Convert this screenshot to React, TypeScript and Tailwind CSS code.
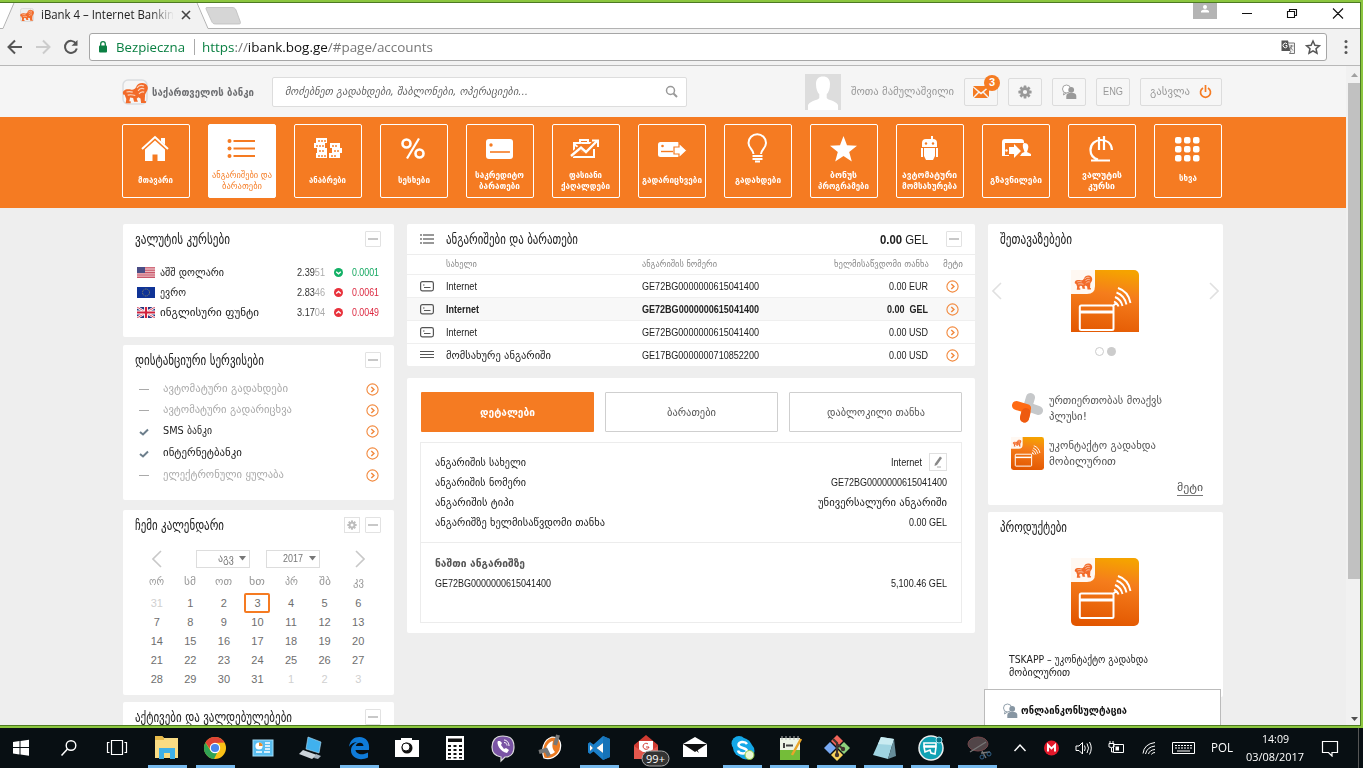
import { useLayoutEffect, useRef, useState } from "react";
import type { ReactNode } from "react";

/* Single-line text condensed or widened to a given width. */
function T({ w, c = "", low, children }: { w: number; c?: string; low?: boolean; children: ReactNode }) {
  const ref = useRef<HTMLSpanElement>(null);
  const [s, setS] = useState(1);
  useLayoutEffect(() => {
    if (ref.current && ref.current.offsetWidth) {
      const natural = parseFloat(getComputedStyle(ref.current).width);
      setS(w / natural);
    }
  }, [w]);
  return (
    <span className={`block shrink-0 whitespace-nowrap ${low ? "pt-[2px]" : ""} ${c}`} style={{ width: w }}>
      <span ref={ref} className="inline-block origin-left" style={{ transform: `scaleX(${s})` }}>
        {children}
      </span>
    </span>
  );
}

function LionShape() {
  return (
    <g fill="#f26b2a">
      <path d="M1 9.500C3 7.500 6.500 7.600 9 8.300C11 8.500 12.600 7.600 13.600 5.600C14.600 3 17 1.400 20 1.600C23.400 1.800 25.600 4.200 25.300 7C25 9.600 23.600 10.600 22.600 13L22.200 19.400H23.400V21.400H18.600L18 17L15.800 15.800L14.200 17.200L15.400 20.200H11.600L10.600 16.600L7.600 16L6.800 19.800H8.200V21.800H3.200L3.800 17.400L2.600 14.400C2 13 2.400 12.400 1.400 13.600C.2 12.600 0 10.600 1 9.500Z" />
      <path d="M14.500 6.500c1.400-2.400 4.200-3.200 7-2M15.600 9.400c1.200-2 3.600-3 6.200-2M16.500 12.600c1-1.800 3-2.600 5.200-2M4 10.600c2-.8 4-.6 6.200 0M5.200 13.600c2.400-.6 5-.4 7.600.4" stroke="#fbd6c0" strokeWidth="1.100" fill="none" />
    </g>
  );
}

function Minus() {
  return (
    <span className="flex size-4 shrink-0 items-center justify-center rounded-[1px] border border-[#e2e2e2] bg-white">
      <span className="h-[2px] w-[10px] bg-[#c8c8c8]" />
    </span>
  );
}

function CircleArrow() {
  return (
    <svg className="size-[13px] shrink-0" viewBox="0 0 13 13" fill="none" stroke="#f28a3f">
      <circle cx="6.500" cy="6.500" r="5.600" strokeWidth="1.100" />
      <path d="M5.300 4L7.900 6.500L5.300 9" strokeWidth="1.500" />
    </svg>
  );
}

function Gear({ size, color }: { size: number; color: string }) {
  return (
    <svg width={size} height={size} viewBox="0 0 16 16" className="shrink-0">
      <g fill={color}>
        {[0, 45, 90, 135, 180, 225, 270, 315].map((a) => (
          <rect key={a} x="6.400" y="0.500" width="3.200" height="4" rx=".6" transform={`rotate(${a} 8 8)`} />
        ))}
      </g>
      <circle cx="8" cy="8" r="3.900" fill="none" stroke={color} strokeWidth="3" />
    </svg>
  );
}

function ChatPerson({ color }: { color: string }) {
  return (
    <svg className="size-4 shrink-0" viewBox="0 0 16 16">
      <circle cx="5.500" cy="5" r="4" fill="#fff" stroke={color} strokeWidth=".9" />
      <path d="M3 8.500L2.500 11L5.500 9" fill="none" stroke={color} strokeWidth=".9" />
      <circle cx="10.200" cy="5.800" r="2.900" fill={color} />
      <path d="M5.300 15V12c0-2.200 2-3.200 5-3.200s5 1 5 3.200v3z" fill={color} />
    </svg>
  );
}

function Chevron({ left, color = "#d6d6d6", h = 18 }: { left?: boolean; color?: string; h?: number }) {
  return (
    <svg width="10" height={h} viewBox="0 0 10 18" className="shrink-0" fill="none" stroke={color} strokeWidth="1.600">
      <path d={left ? "M9 1L1 9L9 17" : "M1 1L9 9L1 17"} />
    </svg>
  );
}

function CardTitle({ text, w, gear, tool = true }: { text: string; w: number; gear?: boolean; tool?: boolean }) {
  return (
    <div className="flex h-[30px] items-center pl-3 pr-[13px]">
      <T w={w} c="text-[14.500px] leading-[20px] text-[#222]">{text}</T>
      <div className="ml-auto flex gap-[5px]">
        {gear && (
          <span className="flex size-4 items-center justify-center border border-[#e2e2e2]">
            <Gear size={10} color="#bdbdbd" />
          </span>
        )}
        {tool && <Minus />}
      </div>
    </div>
  );
}

/* ---------- browser chrome ---------- */

function TabStrip() {
  return (
    <div className="relative h-[26px] bg-white">
      <svg className="absolute left-0 top-0" width="1360" height="26" viewBox="0 0 1360 26">
        <path d="M0 25.500H3C4 25 5 23 6 20L12 4C13 1 14 0 16 0H193C196 0 197 1 198 4L206 22C207 25 208 25.500 210 25.500H1360V27H0Z" fill="#f2f2f2" />
        <path d="M0 25.500H3L14 0M197 0L208 25.500H1360" fill="none" stroke="#b2b2b2" />
        <path d="M207 4.500H232C234 4.500 235 5 236 7L240 18C241 20.500 240.500 21 238 21H216C213.500 21 212.500 20.500 211.500 18L206.500 7C205.600 5 205.600 4.500 207 4.500Z" fill="#d6d6d6" stroke="#bcbcbc" strokeWidth=".8" />
        <rect x="20.500" y="5.500" width="13" height="13" rx="2" fill="#eee" stroke="#ddd" />
        <g transform="translate(20 6) scale(.55)"><LionShape /></g>
        <path d="M182 8L190 16M190 8L182 16" stroke="#444" strokeWidth="1.600" />
        <rect x="1193" y="0" width="24" height="16" fill="#b4b4b4" />
        <circle cx="1205" cy="4" r="2" fill="#fff" />
        <path d="M1201 9.500V8Q1202 6.500 1205 6.500T1209 8V9.500Z" fill="#fff" />
        <path d="M1242 10.500H1252M1287.500 8.500H1294.500V14.500H1287.500ZM1289.500 8.500V6.500H1296.500V12.500H1294.500M1333 5.500L1343 15.500M1343 5.500L1333 15.500" fill="none" stroke="#111" strokeWidth="1.100" />
      </svg>
      <div className="relative flex h-6 items-center pl-[41px]">
        <div className="w-[133px] overflow-hidden text-[12px] text-[#222] [mask-image:linear-gradient(to_right,black_82%,transparent)]">
          <T w={133} c="font-['Open_Sans',sans-serif]">iBank 4 – Internet Bankin</T>
        </div>
      </div>
    </div>
  );
}

function Toolbar() {
  return (
    <div className="flex h-[37px] items-center border-b border-[#b8b8b8] bg-[#f2f2f2] font-['Open_Sans',sans-serif]">
      <svg width="89" height="36" viewBox="0 0 89 36" fill="none">
        <path d="M22 18H9M15 11.500L8.500 18L15 24.500" stroke="#555" strokeWidth="2" />
        <path d="M36 18H49M43 11.500L49.500 18L43 24.500" stroke="#ccc" strokeWidth="2" />
        <path d="M76 14.500A6 6 0 1 0 76.800 19.500" stroke="#555" strokeWidth="2" />
        <path d="M77.500 11V16.800H71.500Z" fill="#555" />
      </svg>
      <div className="flex h-7 w-[1238px] items-center rounded-[3px] border border-[#a6a6a6] bg-white text-[13.500px]">
        <svg width="10" height="14" viewBox="0 0 10 14" className="ml-2">
          <rect x="1" y="5.500" width="8" height="7" rx="1" fill="#0b8043" />
          <path d="M2.700 6V4a2.300 2.300 0 0 1 4.600 0V6" fill="none" stroke="#0b8043" strokeWidth="1.300" />
        </svg>
        <T w={69} c="ml-2 text-[#0b8043]">Bezpieczna</T>
        <span className="ml-[9px] h-4 w-px bg-[#aaa]" />
        <T w={231} c="ml-[7px] text-[#777]">
          <span className="text-[#0b8043]">https</span>://<span className="text-[#111]">ibank.bog.ge</span>/#page/accounts
        </T>
        <svg className="ml-auto" width="46" height="18" viewBox="0 0 46 18">
          <path d="M1.500 2.500H8L10.500 13H1.500Z" fill="#555" />
          <path d="M8 5H14.500V15.500H9.500L11 13" fill="#f2f2f2" stroke="#777" />
          <path d="M7 5.800A2.300 2.300 0 1 0 7 9V7.500H5.500" fill="none" stroke="#fff" />
          <path d="M9.500 8H13.500M11.500 7V8C11.500 10 10.500 11 9.500 12M10 9L13 12.500" fill="none" stroke="#777" strokeWidth=".9" />
          <path d="M33 3L34.900 7.200L39.400 7.700L36 10.700L37 15.200L33 12.900L29 15.200L30 10.700L26.600 7.700L31.100 7.200Z" fill="none" stroke="#555" strokeWidth="1.500" />
        </svg>
      </div>
      <svg className="ml-4" width="6" height="18" viewBox="0 0 6 18" fill="#555">
        <circle cx="3" cy="3.500" r="1.500" /><circle cx="3" cy="9" r="1.500" /><circle cx="3" cy="14.500" r="1.500" />
      </svg>
    </div>
  );
}

/* ---------- page header ---------- */

function Header() {
  const btn = "relative flex h-7 items-center justify-center rounded-[2px] border border-[#dcdcdc] bg-[#f6f6f6]";
  return (
    <header className="flex h-[51px] items-center bg-[#f5f5f5] pl-[122px] text-[#999]">
      <svg width="27" height="26" viewBox="0 0 27 26">
        <rect x="1" y="1" width="24" height="24" rx="5" fill="#f6f6f6" stroke="#dadde0" strokeWidth="1.500" />
        <g transform="translate(.5 2.500)"><LionShape /></g>
      </svg>
      <T w={102} low c="ml-[3px] text-[10.500px] font-bold text-[#6d6e71]">საქართველოს ბანკი</T>
      <div className="ml-[18px] flex h-[30px] w-[415px] items-center rounded-[2px] border border-[#ddd] bg-white pl-3 pr-2">
        <T w={243} low c="text-[11px] italic text-[#666]">მოძებნეთ გადახდები, შაბლონები, ოპერაციები...</T>
        <svg className="ml-auto" width="13" height="13" viewBox="0 0 13 13" fill="none" stroke="#999" strokeWidth="1.500">
          <circle cx="5.500" cy="5.500" r="4" /><path d="M8.500 8.500L12 12" strokeWidth="2" />
        </svg>
      </div>
      <svg className="ml-[118px] mt-px" width="36" height="36" viewBox="0 0 36 36">
        <rect width="36" height="36" fill="#ddd" />
        <path d="M18 2.500C22.500 2.500 25 5 25 10C25 15 23.500 18.500 21.700 20.300V24C23 26.500 30 26 33 31V36H3V31C6 26 13 26.500 14.300 24V20.300C12.500 18.500 11 15 11 10C11 5 13.500 2.500 18 2.500Z" fill="#fff" />
      </svg>
      <T w={103} low c="ml-[10px] pt-1 text-[11px]">შოთა მამულაშვილი</T>
      <div className="ml-[10px] flex gap-[10px]">
        <div className={`${btn} w-[34px]`}>
          <svg width="16" height="12" viewBox="0 0 16 12" fill="#f57b22">
            <path d="M0 0H16L8 6.500ZM0 1.500L5 6L0 11ZM16 1.500L11 6L16 11ZM1 12L6 7L8 8.500L10 7L15 12Z" />
          </svg>
          <span className="absolute -right-[3px] -top-[4px] flex size-4 items-center justify-center rounded-full bg-[#f57b22] font-['Liberation_Sans',sans-serif] text-[11px] font-bold text-white">3</span>
        </div>
        <div className={`${btn} w-[34px]`}><Gear size={14} color="#999" /></div>
        <div className={`${btn} w-[34px]`}><ChatPerson color="#999" /></div>
        <div className={`${btn} w-[34px]`}><T w={20} c="font-['Liberation_Sans',sans-serif] text-[11px]">ENG</T></div>
        <div className={`${btn} w-[82px]`}>
          <T w={40} low c="text-[11px]">გასვლა</T>
          <svg className="ml-[9px]" width="13" height="14" viewBox="0 0 13 14" fill="none" stroke="#f57b22" strokeWidth="1.700">
            <path d="M4 3A5 5 0 1 0 9 3M6.500 0V7" />
          </svg>
        </div>
      </div>
    </header>
  );
}

/* ---------- navigation ---------- */

const navIcons: Record<string, ReactNode> = {
  home: <><path d="M3 16L16 4L29 16" fill="none" stroke="#fff" strokeWidth="2" /><path d="M22 5h4v7l-4-3.500z" /><path d="M6 16.500L16 7.500L26 16.500V28H18.500V21.500H13.500V28H6Z" /></>,
  list: <g fill="#f57b22"><circle cx="4.500" cy="8" r="2" /><circle cx="4.500" cy="15.500" r="2" /><circle cx="4.500" cy="23" r="2" /><path d="M8.500 7H30V9H8.500ZM8.500 14.500H30V16.500H8.500ZM8.500 22H30V24H8.500Z" /></g>,
  coins: <><path d="M5 5h11v5H5zM3 10h11v5H3zM6 15h10v5H6zM5 20h11v5H5zM19 10h10v5H19zM21 15h10v5H21zM18 20h11v5H18z" /><path d="M8 7v2M11 7v2M14 7v2M6 12v2M9 12v2M12 12v2M9 17v2M12 17v2M8 22v2M11 22v2M14 22v2M22 12v2M25 12v2M24 17v2M27 17v2M21 22v2M24 22v2" stroke="#f57b22" strokeWidth="1.400" /></>,
  percent: <g fill="none" stroke="#fff" strokeWidth="2.600"><circle cx="9.500" cy="10.500" r="4" /><circle cx="22.500" cy="20.500" r="4" /><path d="M22 5.500L10 25.500" strokeWidth="2.200" /></g>,
  card: <><rect x="3" y="6" width="27" height="20" rx="3" /><circle cx="8" cy="12" r="1.700" fill="#f57b22" /><path d="M7 19h20" stroke="#f57b22" strokeWidth="1.600" /></>,
  brief: <g fill="none" stroke="#fff" strokeWidth="2"><path d="M25 10H5V24H25V16M11 10V7h8v3M5 11L15 19L20 14" /><path d="M3 22L12 14L17 19L27 8" stroke="#f57b22" strokeWidth="5" /><path d="M2 23L12 14.500L17 19L28 8" strokeWidth="2.400" /><path d="M23 7.500H29V14" /></g>,
  transfer: <><rect x="3" y="9" width="22" height="15" rx="2.500" /><circle cx="7.500" cy="13" r="1.300" fill="#f57b22" /><path d="M6 18.500H18" stroke="#f57b22" strokeWidth="1.400" /><path d="M19 14h5V10L32 17.500L24 25V21h-5z" stroke="#f57b22" strokeWidth="1.200" /></>,
  bulb: <g fill="none" stroke="#fff" strokeWidth="2"><path d="M12.500 21C12.500 17 7.500 15 7.500 10A8.700 8.700 0 0 1 25 10C25 15 20 17 20 21" /><path d="M11.500 23h10M11.500 26h10M14 28.500h5" /></g>,
  star: <path d="M16.500 3L20 12.300L30 12.800L22.200 19L24.800 28.500L16.500 23L8.200 28.500L10.800 19L3 12.800L13 12.300Z" />,
  robot: <><path d="M18 3h2v4h-2z" /><path d="M9 10Q9 6 13 6h7Q24 6 24 10v4H9z" /><path d="M8 15h2v9H8zM23 15h2v9h-2zM11 15h11v8l-2 4h-7l-2-4z" /><circle cx="13" cy="10.500" r="1.200" fill="#f57b22" /><circle cx="20" cy="10.500" r="1.200" fill="#f57b22" /></>,
  send: <><path d="M3 23V9Q3 6 6 6H22Q25 6 25 9V10H6V22H10V23Z" /><circle cx="7.500" cy="17.500" r="1.200" /><path d="M10 14h5V11L22 18L15 25V21H10z" /><path d="M25.500 10c3.500 0 4.500 3 3.500 6l-1 3 4 2v2H21l2-3 2.500-1-1-3c-1-3-1-6 1-6z" /></>,
  lari: <g fill="none" stroke="#fff" strokeWidth="2.200"><path d="M13 26.500C7 25 5.500 21 5.500 17C5.500 10.500 10.500 7 16 7S26.500 10 27 17M14 4V17M19 3V17M6 27.500H25" /></g>,
  grid: <>{[4, 13, 22].map((y) => [4, 13, 22].map((x) => <rect key={`${x}-${y}`} x={x} y={y} width="6.500" height="6.500" rx="2" />))}</>,
};

const nav: { icon: string; lines: [string, number][]; active?: boolean }[] = [
  { icon: "home", lines: [["მთავარი", 35]] },
  { icon: "list", lines: [["ანგარიშები და", 60], ["ბარათები", 40]], active: true },
  { icon: "coins", lines: [["ანაბრები", 37]] },
  { icon: "percent", lines: [["სესხები", 32]] },
  { icon: "card", lines: [["საკრედიტო", 49], ["ბარათები", 41]] },
  { icon: "brief", lines: [["ფასიანი", 33], ["ქაღალდები", 49]] },
  { icon: "transfer", lines: [["გადარიცხვები", 60]] },
  { icon: "bulb", lines: [["გადახდები", 46]] },
  { icon: "star", lines: [["ბონუს", 27], ["პროგრამები", 51]] },
  { icon: "robot", lines: [["ავტომატური", 55], ["მომსახურება", 55]] },
  { icon: "send", lines: [["გზავნილები", 52]] },
  { icon: "lari", lines: [["ვალუტის", 40], ["კურსი", 27]] },
  { icon: "grid", lines: [["სხვა", 18]] },
];

function Nav() {
  return (
    <nav className="flex h-[91px] gap-[18px] bg-[#f57b22] pl-[122px] pt-[7px]">
      {nav.map((n) => (
        <div key={n.icon} className={`flex h-[74px] w-[68px] shrink-0 flex-col items-center rounded-[2px] border border-white pt-2 ${n.active ? "bg-white text-[#f57b22]" : "text-white"}`}>
          <svg width="32" height="32" viewBox="0 0 32 32" fill="#fff" className="mr-[2px] shrink-0">{navIcons[n.icon]}</svg>
          <div className={`mr-px flex h-[22px] flex-col items-center justify-center text-[8.500px] font-bold leading-[11px] ${n.icon === "grid" ? "mt-[2px]" : n.lines.length > 1 ? "mt-[5px]" : "mt-1"}`}>
            {n.lines.map(([t, w]) => <T key={t} w={w} c={n.active ? "font-normal" : ""}>{t}</T>)}
          </div>
        </div>
      ))}
    </nav>
  );
}

/* ---------- left column ---------- */

function Flag({ kind }: { kind: string }) {
  if (kind === "us")
    return (
      <svg width="18" height="11" viewBox="0 0 18 11">
        <rect width="18" height="11" fill="#e9b9bf" />
        <path d="M0 .8H18M0 3.200H18M0 5.600H18M0 8H18M0 10.400H18" stroke="#c9566a" strokeWidth="1.100" />
        <rect width="8" height="6" fill="#4a4d85" />
      </svg>
    );
  if (kind === "eu")
    return (
      <svg width="18" height="11" viewBox="0 0 18 11">
        <rect width="18" height="11" fill="#0f3396" />
        <circle cx="9" cy="5.500" r="3.500" fill="none" stroke="#8f8d62" strokeDasharray="1 .85" />
      </svg>
    );
  return (
    <svg width="18" height="11" viewBox="0 0 18 11">
      <rect width="18" height="11" fill="#27357e" />
      <path d="M0 0L18 11M18 0L0 11" stroke="#fff" strokeWidth="2.400" />
      <path d="M0 0L18 11M18 0L0 11" stroke="#d0203c" strokeWidth=".8" />
      <path d="M9 0V11M0 5.500H18" stroke="#fff" strokeWidth="4" />
      <path d="M9 0V11M0 5.500H18" stroke="#d0203c" strokeWidth="2.200" />
    </svg>
  );
}

const rates = [
  { flag: "us", name: "აშშ დოლარი", w: 64, a: "2.39", b: "51", d: "0.0001", up: false },
  { flag: "eu", name: "ევრო", w: 26, a: "2.83", b: "46", d: "0.0061", up: true },
  { flag: "uk", name: "ინგლისური ფუნტი", w: 99, a: "3.17", b: "04", d: "0.0049", up: true },
];

const services = [
  { name: "ავტომატური გადახდები", w: 125, on: false, h: "h-[21px]" },
  { name: "ავტომატური გადარიცხვა", w: 129, on: false, h: "h-[21px]" },
  { name: "SMS ბანკი", w: 49, on: true, h: "h-[21px]" },
  { name: "ინტერნეტბანკი", w: 79, on: true, h: "h-[23px]" },
  { name: "ელექტრონული ყულაბა", w: 121, on: false, h: "h-[21px]" },
];

const days = ["31", ...Array.from({ length: 31 }, (_, i) => String(i + 1)), "1", "2", "3"];
const week: [string, number][] = [["ორ", 15], ["სმ", 12], ["ოთ", 17], ["ხთ", 16], ["პრ", 13], ["შბ", 12], ["კვ", 11]];

function LeftColumn() {
  return (
    <div className="flex w-[271px] flex-col">
      <section className="h-[113px] rounded-[2px] bg-white">
        <CardTitle text="ვალუტის კურსები" w={95} />
        <div className="pt-2">
          {rates.map((r) => (
            <div key={r.name} className="flex h-5 items-center pl-[14px] text-[11px]">
              <Flag kind={r.flag} />
              <T w={r.w} low c="ml-[5px] text-[#222]">{r.name}</T>
              <T w={28} c="ml-auto font-['Liberation_Sans',sans-serif] text-[#333]">{r.a}<span className="text-[#aaa]">{r.b}</span></T>
              <svg className="ml-[9px] shrink-0" width="9" height="9" viewBox="0 0 9 9">
                <circle cx="4.500" cy="4.500" r="4.500" fill={r.up ? "#e8323c" : "#12b065"} />
                <path d={r.up ? "M2.200 5.500L4.500 3.500L6.800 5.500" : "M2.200 3.700L4.500 5.700L6.800 3.700"} fill="none" stroke="#fff" strokeWidth="1.400" />
              </svg>
              <T w={27} c={`ml-[9px] mr-[15px] font-['Liberation_Sans',sans-serif] ${r.up ? "text-[#dc2840]" : "text-[#12a861]"}`}>{r.d}</T>
            </div>
          ))}
        </div>
      </section>

      <section className="mt-2 h-[155px] rounded-[2px] bg-white">
        <CardTitle text="დისტანციური სერვისები" w={129} />
        <div className="pt-1">
          {services.map((s) => (
            <div key={s.name} className={`flex ${s.h} items-center pl-4 pr-[15px] text-[11px]`}>
              <svg width="10" height="8" viewBox="0 0 10 8" fill="none">
                {s.on ? <path d="M1 4L4 6.500L9 1.500" stroke="#6d7f8c" strokeWidth="2" /> : <path d="M0 3.500H10" stroke="#aaa" />}
              </svg>
              <T w={s.w} c={`ml-[14px] ${s.on ? "text-[#222]" : "text-[#aaa]"}`}>{s.name}</T>
              <span className="ml-auto"><CircleArrow /></span>
            </div>
          ))}
        </div>
      </section>

      <section className="mt-[10px] h-[185px] rounded-[2px] bg-white text-[11px] text-[#777]">
        <CardTitle text="ჩემი კალენდარი" w={89} gear />
        <div className="mt-[9px] flex h-[19px] items-center pl-[29px]">
          <Chevron left color="#c8c8c8" />
          <div className="ml-[34px] flex h-[18px] w-[54px] items-center border border-[#ddd] pl-[21px]">
            <T w={16} low>აგვ</T>
            <svg className="ml-[5px]" width="7" height="5" fill="#777"><path d="M0 0H7L3.500 4.500Z" /></svg>
          </div>
          <div className="ml-4 flex h-[18px] w-[54px] items-center border border-[#ddd] pl-[16px]">
            <T w={20} c="font-['Liberation_Sans',sans-serif]">2017</T>
            <svg className="ml-[6px]" width="7" height="5" fill="#777"><path d="M0 0H7L3.500 4.500Z" /></svg>
          </div>
          <span className="ml-[35px]"><Chevron color="#c8c8c8" /></span>
        </div>
        <div className="ml-[17px] grid w-[235px] grid-cols-7 grid-rows-[25px_20px_19px_19px_19px_19px]">
          {week.map(([d, w]) => <div key={d} className="flex items-center justify-center pt-1 text-[#999]"><T w={w}>{d}</T></div>)}
          {days.map((d, i) => (
            <div key={i} className={`flex items-center justify-center font-['Liberation_Sans',sans-serif] text-[11px] ${i === 0 || i > 31 ? "text-[#d0d0d0]" : "text-[#6e6e6e]"}`}>
              <span className={i === 3 ? "flex h-5 w-[26px] items-center justify-center rounded-[2px] border-2 border-[#f57b22]" : ""}>{d}</span>
            </div>
          ))}
        </div>
      </section>

      <section className="mt-[7px] h-[30px] rounded-t-[2px] bg-white">
        <CardTitle text="აქტივები და ვალდებულებები" w={157} />
      </section>
    </div>
  );
}

/* ---------- middle column ---------- */

const accounts = [
  { name: "Internet", w: 31, no: "GE72BG0000000615041400", sum: "0.00 EUR", sw: 39 },
  { name: "Internet", w: 33, no: "GE72BG0000000615041400", sum: "0.00  GEL", sw: 41, bold: true },
  { name: "Internet", w: 31, no: "GE72BG0000000615041400", sum: "0.00 USD", sw: 39 },
  { name: "მომსახურე ანგარიში", w: 105, no: "GE17BG0000000710852200", sum: "0.00 USD", sw: 39, plain: true },
];

function MiddleColumn() {
  const latin = "font-['Liberation_Sans','DejaVu_Sans',sans-serif]";
  return (
    <div className="ml-[13px] flex w-[568px] flex-col text-[11px] text-[#222]">
      <section className="h-[142px] rounded-[2px] bg-white">
        <div className="flex h-[31px] items-center border-b border-[#ededed] pl-[13px] pr-[13px]">
          <svg width="14" height="10" viewBox="0 0 14 10" stroke="#777" strokeWidth="1.500"><path d="M0 1H2M3 1H14M0 5H2M3 5H14M0 9H2M3 9H14" /></svg>
          <T w={132} c="ml-3 text-[14.500px] leading-[20px]">ანგარიშები და ბარათები</T>
          <T w={48} c={`ml-auto mr-[18px] pt-[2px] text-[13px] ${latin}`}><b>0.00</b> GEL</T>
          <Minus />
        </div>
        <div className="flex h-5 items-center border-b border-[#efefef] pl-[39px] text-[9px] text-[#888]">
          <div className="w-[196px]"><T w={31}>სახელი</T></div>
          <T w={75}>ანგარიშის ნომერი</T>
          <T w={95} c="ml-auto">ხელმისაწვდომი თანხა</T>
          <T w={20} c="ml-[14px] mr-[12px]">მეტი</T>
        </div>
        {accounts.map((a, i) => (
          <div key={i} className={`flex h-[23px] items-center pl-[13px] ${latin} ${i < 3 ? "border-b border-[#efefef]" : ""} ${a.bold ? "bg-[#f8f8f8] font-bold" : ""}`}>
            <svg width="14" height="11" viewBox="0 0 14 11" fill="none" stroke="#555">
              {a.plain ? <path d="M0 1.500H14M0 4.500H14M0 7.500H14" /> : <><rect x=".6" y=".6" width="12.800" height="9.300" rx="1.800" strokeWidth="1.200" /><path d="M3 4H4.500M4 6.500H10.500" /></>}
            </svg>
            <div className="ml-3 w-[196px]"><T w={a.w} low={a.plain} c={a.plain ? "font-['DejaVu_Sans',sans-serif]" : ""}>{a.name}</T></div>
            <T w={117}>{a.no}</T>
            <T w={a.sw} c="ml-auto"><span className="whitespace-pre">{a.sum}</span></T>
            <span className="ml-[18px] mr-[16px]"><CircleArrow /></span>
          </div>
        ))}
      </section>

      <section className="mt-3 h-[255px] rounded-[2px] bg-white px-[13px] pt-[14px]">
        <div className="ml-px flex gap-[11px] text-[#555]">
          <div className="flex h-10 w-[173px] items-center justify-center rounded-[1px] bg-[#f57b22] font-bold text-white"><T w={55} low>დეტალები</T></div>
          <div className="flex h-10 w-[173px] items-center justify-center rounded-[1px] border border-[#cfcfcf]"><T w={49} low>ბარათები</T></div>
          <div className="flex h-10 w-[173px] items-center justify-center rounded-[1px] border border-[#cfcfcf]"><T w={98} low>დაბლოკილი თანხა</T></div>
        </div>
        <div className="mt-[10px] h-[181px] border border-[#ececec]">
          <div className="flex h-[100px] flex-col border-b border-[#ececec] px-[14px] pt-[9px]">
            <div className="flex h-5 items-center justify-between">
              <T w={91} low>ანგარიშის სახელი</T>
              <div className="flex items-center">
                <T w={31} c={latin}>Internet</T>
                <span className="ml-[7px] flex size-[18px] items-center justify-center border border-[#e0e0e0]">
                  <svg width="10" height="12" viewBox="0 0 10 12"><path d="M7 0.500L9 2L4 9L1.500 10L2 7.500Z" fill="#888" /><path d="M4 11H8" stroke="#aaa" /></svg>
                </span>
              </div>
            </div>
            <div className="flex h-5 items-center justify-between"><T w={91} low>ანგარიშის ნომერი</T><T w={116} c={latin}>GE72BG0000000615041400</T></div>
            <div className="flex h-5 items-center justify-between"><T w={79} low>ანგარიშის ტიპი</T><T w={129} low>უნივერსალური ანგარიში</T></div>
            <div className="flex h-5 items-center justify-between"><T w={170} low>ანგარიშზე ხელმისაწვდომი თანხა</T><T w={38} c={latin}>0.00 GEL</T></div>
          </div>
          <div className="px-[14px] pt-[10px]">
            <div className="flex h-5 items-center font-bold text-[#555]"><T w={90} low>ნაშთი ანგარიშზე</T></div>
            <div className={`flex h-5 items-center justify-between ${latin}`}><T w={116}>GE72BG0000000615041400</T><T w={56}>5,100.46 GEL</T></div>
          </div>
        </div>
      </section>
    </div>
  );
}

/* ---------- right column ---------- */

function AppTile({ id, size, h = 68 }: { id: string; size: number; h?: number }) {
  return (
    <svg width={size} height={(size * h) / 68} viewBox={`0 0 68 ${h}`} className="shrink-0">
      <defs>
        <linearGradient id={id} x1=".6" y1="0" x2=".45" y2="1">
          <stop offset="0" stopColor="#f5a300" /><stop offset=".35" stopColor="#f57d1c" /><stop offset="1" stopColor="#e25600" />
        </linearGradient>
      </defs>
      <rect width="68" height="68" rx="5" fill={`url(#${id})`} />
      <path d="M0 0H24V16Q24 24 16 24H0Z" fill="#fff8f2" />
      <g transform="translate(3.500 4.500) scale(.7)"><LionShape /></g>
      <g fill="none" stroke="#fff">
        <rect x="8.800" y="35.500" width="33.700" height="24.500" rx="1.500" strokeWidth="2" />
        <path d="M9 42H42" strokeWidth="3" />
        <path d="M42 36Q46 32 45 35M43 31.500Q46.500 33 47.500 36.500M44 27Q50 29.500 51.500 36M45.500 22.500Q53.500 25.500 55.500 34.500M47 18Q57.500 21.500 59.500 33" strokeWidth="1.900" />
      </g>
    </svg>
  );
}

function RightColumn() {
  return (
    <div className="ml-[13px] flex w-[235px] flex-col text-[11px] text-[#555]">
      <section className="h-[281px] rounded-[2px] bg-white">
        <CardTitle text="შეთავაზებები" w={72} tool={false} />
        <div className="mt-4 flex h-[62px] items-start justify-between px-1">
          <span className="mt-3"><Chevron left color="#e0e0e0" /></span>
          <span className="mr-px"><AppTile id="tileA" size={68} h={62} /></span>
          <span className="mt-3"><Chevron color="#e0e0e0" /></span>
        </div>
        <div className="mt-[15px] flex justify-center gap-[3px]">
          <span className="size-[9px] rounded-full border border-[#ccc]" />
          <span className="size-[9px] rounded-full bg-[#ccc]" />
        </div>
        <div className="mt-9 flex h-8 items-center pl-[23px]">
          <svg width="33" height="32" viewBox="0 0 33 32" fill="none" strokeLinecap="round" strokeWidth="9">
            <path d="M19.500 5.500L17 14M16 14.500L27.500 18.500" stroke="#c6c8ca" />
            <path d="M5.500 13.500L15.500 16.500L13.500 26" stroke="#ff6a13" strokeLinejoin="round" />
            <path d="M15 20.500L13.500 26" stroke="#ee5a10" />
          </svg>
          <div className="ml-[5px] pt-px leading-4"><T w={113}>ურთიერთობას მოაქვს</T><T w={38}>პლუსი!</T></div>
        </div>
        <div className="mt-[13px] flex h-[33px] items-center pl-[23px]">
          <AppTile id="tileB" size={33} />
          <div className="ml-[5px] pt-px leading-4"><T w={107}>უკონტაქტო გადახდა</T><T w={67}>მობილურით</T></div>
        </div>
        <div className="mt-[11px] flex justify-end pr-5"><T w={26} c="border-b border-[#777] leading-[14px]">მეტი</T></div>
      </section>

      <section className="mt-[7px] h-[185px] rounded-[2px] bg-white">
        <CardTitle text="პროდუქტები" w={67} tool={false} />
        <div className="mr-px mt-4 flex justify-center"><AppTile id="tileC" size={68} /></div>
        <div className="mt-[27px] pl-[21px] text-[10px] leading-[13px] text-[#222]">
          <T w={139}>TSKAPP – უკონტაქტო გადახდა</T>
          <T w={61}>მობილურით</T>
        </div>
      </section>
    </div>
  );
}

/* ---------- taskbar ---------- */

const apps: { k: string; run?: boolean; art: ReactNode }[] = [
  { k: "explorer", run: true, art: <><path d="M4 4H11L13 6H27V26H4Z" fill="#f9dc84" /><path d="M4 4H11L13 6V8H4Z" fill="#e8bb4b" /><path d="M8 16H24V27H19V21H13V27H8Z" fill="#3fb0e8" /></> },
  { k: "chrome", run: true, art: <><circle cx="16" cy="16" r="11" fill="#fbc116" /><path d="M16 5A11 11 0 0 1 25.600 10.600L16 11L11 17L6.400 10.500A11 11 0 0 1 16 5Z" fill="#de4436" /><path d="M6.400 10.500L11.500 18.800L18 21L15 27A11 11 0 0 1 6.400 10.500Z" fill="#31a354" /><circle cx="16" cy="16" r="5.200" fill="#fff" /><circle cx="16" cy="16" r="4.100" fill="#4a87ee" /></> },
  { k: "panel", art: <><rect x="6" y="8" width="20" height="16" fill="#58bdf0" stroke="#a3def9" /><circle cx="12" cy="14" r="3.600" fill="#fff" /><path d="M12 14V10.400A3.600 3.600 0 0 1 15.600 14Z" fill="#e98d28" /><path d="M18 11h5M18 14h5M18 17h5M9 20h6M17 20h6" stroke="#fff" strokeWidth="1.500" /></> },
  { k: "pc", art: <><path d="M13 5L26 10L24 21L11 17Z" fill="#40b1ee" stroke="#b4e1fa" strokeWidth=".6" /><path d="M8 18L22 23L17 27L4 22Z" fill="#ccd4da" /><path d="M21 22l5 2-3 3-4-1z" fill="#a8b4be" /></> },
  { k: "edge", run: true, art: <path d="M6 15C7 8 11 5 16.500 5C23 5 27 10 26 18H12.500C13 22 19 24 25 20.500V25.500C17 29.500 8 26 8 18.500C8 14 11 11.500 14 10C9 10.500 7 13 6 15ZM12.800 14H20.500C20.500 9.500 13.500 9.500 12.800 14Z" fill="#0f7bd9" /> },
  { k: "camera", art: <><path d="M4 8H10V6H21V8H28V25H4Z" fill="#fff" /><circle cx="16" cy="16" r="5.500" fill="#111" /><circle cx="15" cy="15" r="4" fill="#fff" stroke="#111" /></> },
  { k: "calc", art: <><rect x="7" y="4" width="18" height="24" fill="#fff" /><path d="M9 6.500H23V10H9ZM9 13h3v2H9zM14.500 13h3v2h-3zM20 13h3v2h-3zM9 17h3v2H9zM14.500 17h3v2h-3zM20 17h3v2h-3zM9 21h3v2H9zM14.500 21h3v2h-3zM20 21h3v2h-3zM9 25h3v1.500H9zM14.500 25h3v1.500h-3zM20 25h3v1.500h-3z" fill="#111" /></> },
  { k: "viber", art: <><path d="M16 4C24 4 27 8 27 15S23 25 18 25L14 29V25C8 24 5 21 5 15S8 4 16 4Z" fill="#7a54a5" stroke="#ddd" strokeWidth="1.200" /><path d="M11 9C9 11 13 20 20 21L22 18L19 16L17 17L14 13L15 11L13 9Z" fill="#fff" /><path d="M17 8C20 8 22 11 22 14M17 10.500C19 10.500 20 12 20 13.500" stroke="#fff" fill="none" /></> },
  { k: "tool", art: <><path d="M9 26C6 18 8 8 17 5C24 5 27 10 25 18C22 25 15 28 9 26Z" fill="#eb7a22" stroke="#fff" strokeWidth="1.200" /><path d="M11 21C10 15 13 10 18 9C17 13 17 17 20 20C17 23 14 23 11 21Z" fill="#fff" /><path d="M23 3L20 13M4 20L11 18L14 24" stroke="#777" strokeWidth="4" fill="none" /></> },
  { k: "code", run: true, art: <><path fillRule="evenodd" d="M20 4L27 7V25L20 28L10.500 19.500L7 22L5 20.500V11.500L7 10L10.500 12.500ZM20 11V21L13.500 16ZM7 13V19L10 16Z" fill="#1b7fc9" /><path d="M20 11V21L13.500 16ZM7 13V19L10 16Z" fill="#fff" /><path d="M20 4L27 7V25L20 28Z" fill="#1673b8" /></> },
  { k: "gmail", art: <><path d="M3 13L15 3L27 13V27H3Z" fill="#d13b32" /><rect x="8" y="9" width="14" height="11" fill="#fff" /><path d="M3 14L15 22L27 14V27H3Z" fill="#e4574d" /><path d="M17 12A3 3 0 1 0 18 15H15" stroke="#d13b32" fill="none" /><rect x="11" y="19" width="27" height="15" rx="7.500" fill="#333" stroke="#aaa" /><text x="24.500" y="31" fontSize="11" textAnchor="middle" fill="#fff" fontFamily="Open Sans">99+</text></> },
  { k: "mail", art: <><path d="M4 12L16 5L28 12V25H4Z" fill="#fff" /><path d="M4 12L28 12L16 20Z" fill="#111" /><path d="M4 12L14 16L20 21L17 15" fill="#111" /></> },
  { k: "skype", run: true, art: <><circle cx="12" cy="11.500" r="7.500" fill="#14a8e8" /><circle cx="19" cy="19" r="8.500" fill="#14a8e8" /><circle cx="15.500" cy="15.500" r="9.500" fill="#14a8e8" /><path d="M20 12C18 9 11 9.500 11.500 13S20 15.500 20 19S12 22.500 11 18.500" stroke="#fff" strokeWidth="2.500" fill="none" /><circle cx="22.500" cy="23" r="4.500" fill="#e9f9d4" stroke="#8cc63f" /></> },
  { k: "npp", run: true, art: <><path d="M6 6H26V28H6Z" fill="#eef5e8" /><path d="M6 18H26V28H6Z" fill="#74bd39" /><path d="M8 4v4M12 4v4M16 4v4M20 4v4M24 4v4" stroke="#bbb" /><path d="M10 11V16M12 13.500H19" stroke="#444" strokeWidth="2" /><path d="M27 7L18 23" stroke="#eaa52a" strokeWidth="2.500" /></> },
  { k: "git", run: true, art: <><path d="M16 3L22 9L16 15L10 9Z" fill="#f2645a" /><path d="M9 10L15 16L9 22L3 16Z" fill="#78a9f3" /><path d="M23 10L29 16L23 22L17 16Z" fill="#8ed17d" /><path d="M16 17L22 23L16 29L10 23Z" fill="#f8d35c" /><path d="M12 7L16 11V24M16 12L22 17" stroke="#43342f" strokeWidth="2.200" fill="none" /><circle cx="16" cy="23" r="2.200" fill="#43342f" /><circle cx="22" cy="17" r="2.200" fill="#43342f" /></> },
  { k: "notepad", run: true, art: <><path d="M13 5L26 7L20 27L5 23Z" fill="#9fd4e1" /><path d="M13 5L26 7L24 13L10 12Z" fill="#c9ebf1" /><path d="M26 7L28 24L20 27Z" fill="#668d9a" /></> },
  { k: "shorts", run: true, art: <><circle cx="16" cy="16" r="12" fill="#10a2b4" stroke="#eee" strokeWidth="1.500" /><path d="M9 11H21V14H9ZM9 15H21L20 22L16 21L15 18L10 20Z" fill="none" stroke="#fff" strokeWidth="1.600" /><circle cx="24" cy="8" r="3" fill="#0a6e82" stroke="#9ae4ee" /></> },
  { k: "snip", run: true, art: <><ellipse cx="16" cy="12" rx="10" ry="7" fill="#514548" stroke="#75474b" /><path d="M8 20L24 10M20 19L24 26M19 21L28 20" stroke="#777" strokeWidth="1.300" /><circle cx="20" cy="25" r="2" fill="none" stroke="#315f84" /><circle cx="27" cy="22" r="2" fill="none" stroke="#315f84" /></> },
];

function Taskbar() {
  return (
    <div className="flex h-10 items-center overflow-hidden bg-[#080f13] font-['Open_Sans',sans-serif] text-white">
      <svg width="143" height="40" viewBox="0 0 143 40" className="shrink-0">
        <path d="M13 14L19.500 13V19H13ZM20.500 13L29 11.800V19H20.500ZM13 20H19.500V26.500L13 25.500ZM20.500 20H29V27.800L20.500 26.600Z" fill="#fff" />
        <circle cx="71" cy="17.500" r="4.800" fill="none" stroke="#fff" strokeWidth="1.400" />
        <path d="M67.500 21L61.500 27.500" stroke="#fff" strokeWidth="1.500" />
        <path d="M111.500 12.500H122.500V26.500H111.500ZM109.500 14.500H107.500V24.500H109.500M124.500 14.500H126.500V24.500H124.500" fill="none" stroke="#fff" strokeWidth="1.200" />
      </svg>
      {apps.map((a, i) => (
        <div key={a.k} className={`flex h-10 shrink-0 flex-col items-center pt-[4px] ${i < 12 ? "w-12" : "w-[47px]"}`}>
          <svg width="32" height="32" viewBox="0 0 32 32" className="shrink-0 overflow-visible">{a.art}</svg>
          <span className={`mt-[1px] h-[3px] w-[39px] shrink-0 ${a.run ? "bg-[#76b9ed]" : ""}`} />
        </div>
      ))}
      <svg width="206" height="40" viewBox="1001 0 206 40" className="shrink-0" fill="none" stroke="#fff">
        <path d="M1014.500 23L1020 17L1025.500 23" strokeWidth="1.400" />
        <circle cx="1051.500" cy="20" r="7.500" fill="#e3192b" stroke="none" />
        <path d="M1048 23.500V17L1051.500 20.500L1055 17V23.500" strokeWidth="1.900" />
        <path d="M1076 18H1079L1082.500 14.500V26L1079 22.500H1076ZM1084.500 17.500Q1086 20 1084.500 23M1087 15.500Q1090 20 1087 25M1089.500 14Q1093 20 1089.500 26.500" />
        <path d="M1113.500 16.500H1123.500V24.500H1113.500ZM1109 15.500H1114V19Q1111.500 20 1109 19ZM1110 15.500V13M1113 15.500V13M1111.500 20V24H1113" /><path d="M1115.500 18.500H1119V22.500H1115.500Z" fill="#fff" stroke="none" />
        <path d="M1143 25.500Q1144 16 1155 14.500M1145.500 26Q1147 19 1155 18M1148.500 26Q1149.500 22 1155 21.500M1151.500 26.500Q1152 24.500 1155 24.500" />
        <path d="M1175 17.500H1192M1175 20H1192" strokeDasharray="2 1" /><path d="M1172.500 14.500H1194.500V25.500H1172.500ZM1177 23H1190" />
      </svg>
      <T w={22} c="ml-[4px] text-[12px]">POL</T>
      <div className="ml-[13px] flex flex-col items-center text-[11.500px] leading-[18px]">
        <T w={27}>14:09</T>
        <T w={58}>03/08/2017</T>
      </div>
      <svg className="ml-[17px] shrink-0" width="18" height="18" viewBox="0 0 18 18" fill="none" stroke="#fff" strokeWidth="1.200">
        <path d="M1.500 2.500H16.500V13.500H11V17L7.500 13.500H1.500Z" />
      </svg>
      <span className="ml-[19px] h-10 w-px shrink-0 bg-[#555]" />
    </div>
  );
}

export default function App() {
  return (
    <div className="flex h-[768px] w-[1363px] flex-col overflow-hidden bg-black font-['DejaVu_Sans',sans-serif]">
      <div className="h-[728px] border-b-2 border-r-2 border-t-2 border-[#8cc63f]">
        <div className="flex h-[724px] flex-col border-b border-r border-t border-[#4d7a22]">
          <TabStrip />
          <Toolbar />
          <div className="flex h-[659px] overflow-hidden">
            <main className="relative h-[659px] w-[1346px] shrink-0 overflow-hidden bg-[#eee]">
              <Header />
              <Nav />
              <div className="flex items-start pl-[123px] pt-4">
                <LeftColumn />
                <MiddleColumn />
                <RightColumn />
              </div>
              <div className="absolute bottom-0 left-[984px] flex h-9 w-[237px] items-center border border-b-0 border-[#bbb] bg-white pl-[17px] pt-[6px]">
                <ChatPerson color="#8796a3" />
                <T w={106} c="ml-[3px] text-[10px] font-bold text-[#111]">ონლაინკონსულტაცია</T>
              </div>
            </main>
            <div className="flex w-[14px] flex-col items-end justify-between bg-[#f1f1f1]">
              <div className="flex h-[17px] w-3 items-center justify-center"><svg width="7" height="4"><path d="M0 4H7L3.500 0Z" fill="#a0a0a0" /></svg></div>
              <div className="h-[496px] w-3 bg-[#c1c1c1]" />
              <div className="flex h-[146px] w-3 items-end justify-center pb-1"><svg width="7" height="4"><path d="M0 0H7L3.500 4Z" fill="#505050" /></svg></div>
            </div>
          </div>
        </div>
      </div>
      <Taskbar />
    </div>
  );
}
